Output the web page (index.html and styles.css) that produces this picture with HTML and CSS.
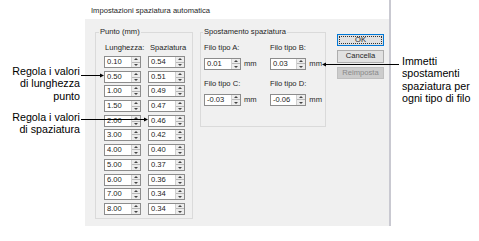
FILE: index.html
```html
<!DOCTYPE html>
<html lang="it">
<head>
    <meta charset="UTF-8">
    <title>Impostazioni spaziatura automatica</title>
    <link rel="stylesheet" href="styles.css">
</head>
<body>
    <div class="page">
        <div class="notes-left">
            <p class="note note-length">Regola i valori<br>di lunghezza<br>punto</p>
            <p class="note note-spacing">Regola i valori<br>di spaziatura</p>
        </div>

        <div class="dialog">
            <div class="titlebar">Impostazioni spaziatura automatica</div>
            <div class="client">
                <fieldset class="group group-punto">
                    <legend>Punto (mm)</legend>
                    <div class="col-heads">
                        <span class="col-head">Lunghezza:</span>
                        <span class="col-head">Spaziatura</span>
                    </div>
                    <div class="punto-grid">
                        <span class="spin"><span class="spin-value">0.10</span><span class="spin-btn"></span></span>
                        <span class="spin"><span class="spin-value">0.54</span><span class="spin-btn"></span></span>
                        <span class="spin"><span class="spin-value">0.50</span><span class="spin-btn"></span></span>
                        <span class="spin"><span class="spin-value">0.51</span><span class="spin-btn"></span></span>
                        <span class="spin"><span class="spin-value">1.00</span><span class="spin-btn"></span></span>
                        <span class="spin"><span class="spin-value">0.49</span><span class="spin-btn"></span></span>
                        <span class="spin"><span class="spin-value">1.50</span><span class="spin-btn"></span></span>
                        <span class="spin"><span class="spin-value">0.47</span><span class="spin-btn"></span></span>
                        <span class="spin"><span class="spin-value">2.00</span><span class="spin-btn"></span></span>
                        <span class="spin"><span class="spin-value">0.46</span><span class="spin-btn"></span></span>
                        <span class="spin"><span class="spin-value">3.00</span><span class="spin-btn"></span></span>
                        <span class="spin"><span class="spin-value">0.42</span><span class="spin-btn"></span></span>
                        <span class="spin"><span class="spin-value">4.00</span><span class="spin-btn"></span></span>
                        <span class="spin"><span class="spin-value">0.40</span><span class="spin-btn"></span></span>
                        <span class="spin"><span class="spin-value">5.00</span><span class="spin-btn"></span></span>
                        <span class="spin"><span class="spin-value">0.37</span><span class="spin-btn"></span></span>
                        <span class="spin"><span class="spin-value">6.00</span><span class="spin-btn"></span></span>
                        <span class="spin"><span class="spin-value">0.36</span><span class="spin-btn"></span></span>
                        <span class="spin"><span class="spin-value">7.00</span><span class="spin-btn"></span></span>
                        <span class="spin"><span class="spin-value">0.34</span><span class="spin-btn"></span></span>
                        <span class="spin"><span class="spin-value">8.00</span><span class="spin-btn"></span></span>
                        <span class="spin"><span class="spin-value">0.34</span><span class="spin-btn"></span></span>
                    </div>
                </fieldset>

                <fieldset class="group group-shift">
                    <legend>Spostamento spaziatura</legend>
                    <div class="shift-grid">
                        <div class="field">
                            <span class="field-label">Filo tipo A:</span>
                            <div class="field-row">
                                <span class="spin"><span class="spin-value">0.01</span><span class="spin-btn"></span></span>
                                <span class="unit">mm</span>
                            </div>
                        </div>
                        <div class="field">
                            <span class="field-label">Filo tipo B:</span>
                            <div class="field-row">
                                <span class="spin"><span class="spin-value">0.03</span><span class="spin-btn"></span></span>
                                <span class="unit">mm</span>
                            </div>
                        </div>
                        <div class="field">
                            <span class="field-label">Filo tipo C:</span>
                            <div class="field-row">
                                <span class="spin"><span class="spin-value">-0.03</span><span class="spin-btn"></span></span>
                                <span class="unit">mm</span>
                            </div>
                        </div>
                        <div class="field">
                            <span class="field-label">Filo tipo D:</span>
                            <div class="field-row">
                                <span class="spin"><span class="spin-value">-0.06</span><span class="spin-btn"></span></span>
                                <span class="unit">mm</span>
                            </div>
                        </div>
                    </div>
                </fieldset>

                <div class="buttons">
                    <button class="btn btn-default"><span class="focus-ring">OK</span></button>
                    <button class="btn">Cancella</button>
                    <button class="btn" disabled>Reimposta</button>
                </div>
            </div>
        </div>

        <div class="notes-right">
            <p class="note">Immetti<br>spostamenti<br>spaziatura per<br>ogni tipo di filo</p>
        </div>

        <!-- callout lines -->
        <svg class="callouts" width="479" height="241" viewBox="0 0 479 241">
            <path d="M81 75.5H103" stroke="#000" stroke-width="1"/>
            <path d="M100 73.5L104 75.5L100 77.5Z" fill="#000"/>
            <path d="M81 119.5H147" stroke="#000" stroke-width="1"/>
            <path d="M144 117.5L148 119.5L144 121.5Z" fill="#000"/>
            <path d="M399 64.5H323" stroke="#000" stroke-width="1"/>
            <path d="M326 62.5L322 64.5L326 66.5Z" fill="#000"/>
        </svg>
    </div>
</body>
</html>
```

FILE: styles.css
```css
body {
    margin: 0;
    background-color: #fff;
    font-family: "Liberation Sans", Arial, sans-serif;
}

.page {
    position: relative;
    display: flex;
    width: 479px;
    height: 241px;
}

/* annotations */
.note {
    margin: 0;
    font-size: 10.7px;
    line-height: 12.5px;
    color: #000;
}

.notes-left {
    width: 85px;
    padding-right: 5px;
    box-sizing: border-box;
    text-align: right;
}

.note-length {
    margin-top: 64.5px;
}

.note-spacing {
    margin-top: 8.5px;
}

.notes-right {
    padding-left: 11px;
}

.notes-right .note {
    margin-top: 54.5px;
}

.callouts {
    position: absolute;
    left: 0;
    top: 0;
    pointer-events: none;
}

/* dialog */
.dialog {
    width: 306px;
    height: 226px;
    border-right: 2px solid #c9c9d1;
    box-sizing: border-box;
    display: flex;
    flex-direction: column;
    font-size: 7.6px;
    color: #1e1e1e;
}

.titlebar {
    height: 19px;
    box-sizing: border-box;
    padding: 6px 0 0 6px;
    line-height: 10px;
    background-color: #fff;
}

.client {
    flex: 1;
    display: flex;
    align-items: flex-start;
    padding: 8px 0 0 10px;
    background-color: #f0f0f0;
}

.group {
    margin: 0;
    border: 1px solid #dadada;
    box-sizing: border-box;
}

.group legend {
    padding: 0 1px;
    line-height: 10px;
}

.group-punto {
    width: 98px;
    height: 192px;
    padding: 6px 0 0 8px;
}

.group-punto legend {
    margin-left: -5px;
}

.col-heads {
    display: flex;
    gap: 7px;
    line-height: 10px;
    margin-bottom: 3px;
}

.col-head {
    width: 37px;
    padding-left: 1px;
    box-sizing: border-box;
    white-space: nowrap;
}

.col-head + .col-head {
    padding-left: 2px;
}

.punto-grid {
    display: grid;
    grid-template-columns: 37px 37px;
    column-gap: 7px;
    row-gap: 2.7px;
}

/* spin box */
.spin {
    display: flex;
    width: 37px;
    height: 12px;
    border: 1px solid #8c8c8c;
    box-sizing: border-box;
    background-color: #fff;
}

.spin-value {
    flex: 1;
    padding-left: 2px;
    line-height: 10px;
    color: #222;
}

.spin-btn {
    position: relative;
    width: 8px;
    border-left: 1px solid #d0d0d0;
    background: linear-gradient(#ececec 4.5px, #b8b8b8 4.5px, #b8b8b8 5.5px, #ececec 5.5px);
}

.spin-btn::before,
.spin-btn::after {
    content: "";
    position: absolute;
    left: 2px;
    border-left: 2px solid transparent;
    border-right: 2px solid transparent;
}

.spin-btn::before {
    top: 1px;
    border-bottom: 2px solid #444;
}

.spin-btn::after {
    bottom: 1px;
    border-top: 2px solid #444;
}

.group-shift {
    width: 126px;
    height: 100px;
    margin-left: 7px;
    padding: 6px 0 0 3px;
}

.group-shift legend {
    margin-left: -1px;
}

.shift-grid {
    display: grid;
    grid-template-columns: 66px 52px;
    row-gap: 9.5px;
}

.field {
    display: flex;
    flex-direction: column;
}

.field-label {
    line-height: 10px;
    margin-bottom: 4.5px;
    white-space: nowrap;
}

.field-row {
    display: flex;
    align-items: center;
}

.unit {
    margin-left: 3px;
    line-height: 10px;
}

/* buttons */
.buttons {
    display: flex;
    flex-direction: column;
    gap: 4px;
    margin-left: 11px;
    margin-top: 6.5px;
}

.btn {
    width: 47px;
    height: 12.5px;
    padding: 0;
    border: 1px solid #adadad;
    background-color: #e1e1e1;
    font-family: "Liberation Sans", Arial, sans-serif;
    font-size: 7.6px;
    color: #1e1e1e;
    line-height: 10px;
    box-sizing: border-box;
}

.btn-default {
    display: flex;
    border-color: #0078d7;
    padding: 1px;
}

.focus-ring {
    flex: 1;
    display: flex;
    align-items: center;
    justify-content: center;
    border: 1px dotted #333;
}

.btn:disabled {
    background-color: #cccccc;
    border-color: #bfbfbf;
    color: #8a8a8a;
}
```
